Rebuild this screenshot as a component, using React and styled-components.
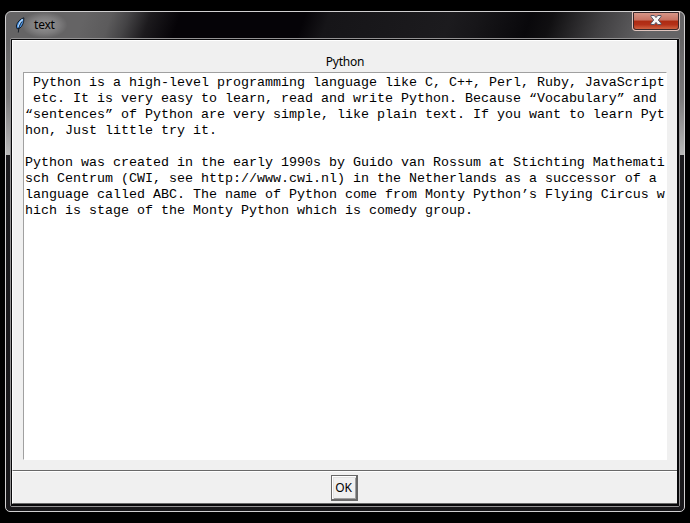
import React from "react";
import styled, { createGlobalStyle } from "styled-components";

const GlobalStyle = createGlobalStyle`
  * { box-sizing: border-box; }
  body { margin: 0; background: #000; overflow: hidden; }
`;

const Desktop = styled.main`
  width: 690px;
  height: 523px;
  padding: 11px 5px 11px;
  background: #000;
  font-family: "Noto Sans", "Open Sans", sans-serif;
  font-size: 12px;
  color: #000;
`;

const Window = styled.section`
  display: flex;
  flex-direction: column;
  width: 680px;
  height: 501px;
  padding: 0 4px 4px;
  border: 1px solid #d0cfd0;
  border-radius: 6px 6px 5px 5px;
  background:
    linear-gradient(110deg, #656465 0, #656465 75px, #5c5b5c 100px, #454446 116px, #1c1a1d 137px, #050307 165px, #050307 282px, #161518 305px, #1c1b1e 420px, #171619 445px, #09080b 495px, #100f11 515px, #403f41 562px, #656466 610px, #656466 100%) 0 0 / 100% 28px no-repeat,
    linear-gradient(#656465, #7a797a 50%, #b9b9b9) 0 28px / 100% 115px no-repeat,
    linear-gradient(#1b1a1d, #19181b 70%, #111113) 0 143px / 100% 100% no-repeat;
`;

const TitleBar = styled.header`
  display: flex;
  flex: none;
  align-items: flex-start;
  height: 26px;
  padding-left: 4px;
`;

const Feather = styled.svg`
  width: 12px;
  height: 16px;
  margin-top: 5px;
`;

const Title = styled.h1`
  margin: 0 auto 0 -4px;
  height: 26px;
  padding: 0 12px;
  background: radial-gradient(ellipse at center, #a3a2a3cc 0, #9291928c 45%, #65646500 72%);
  font-size: 12px;
  font-weight: 400;
  letter-spacing: -0.2px;
  line-height: 25px;
`;

const CloseButton = styled.button`
  display: flex;
  align-items: center;
  justify-content: center;
  width: 48px;
  height: 20px;
  margin: -1px 0 0;
  padding: 0 0 2px;
  border: 1px solid #dfc4bd;
  border-top-color: #e8e2e0;
  border-radius: 0 0 4px 4px;
  outline: 1px solid #38272a;
  outline-offset: -2px;
  background: linear-gradient(#d99a8c 0, #c77262 45%, #ad2b12 50%, #b43119 70%, #d56e4b 100%);
`;

const Client = styled.div`
  display: flex;
  flex: 1;
  flex-direction: column;
  min-height: 0;
  border: 1px solid #939293;
  border-radius: 2px;
`;

const Panel = styled.div`
  display: flex;
  flex: 1;
  flex-direction: column;
  border: 1px solid #08080a;
  border-right-width: 2px;
  border-bottom-width: 2px;
  background: #f0f0f0;
`;

const Content = styled.div`
  display: flex;
  flex: 1;
  flex-direction: column;
  padding: 13px 10px 10px;
  border: 1px solid #fff;
  border-right: 0;
  border-bottom: 1px solid #696969;
`;

const Heading = styled.h2`
  margin: 0;
  height: 18px;
  font-size: 12px;
  font-weight: 400;
  letter-spacing: -0.25px;
  line-height: 16px;
  text-align: center;
`;

const TextArea = styled.pre`
  flex: 1;
  width: 644px;
  margin: 0;
  padding: 2px 0 0 1px;
  overflow: hidden;
  border: 1px solid #fff;
  border-top-color: #a0a0a0;
  border-left-color: #a0a0a0;
  background: #fff;
  font-family: "Liberation Mono", monospace;
  font-size: 13.333px;
  line-height: 16px;
`;

const Footer = styled.footer`
  display: flex;
  flex: none;
  align-items: flex-start;
  justify-content: center;
  height: 33px;
  padding: 3px 2px 0 0;
  border: 1px solid #fff;
  border-width: 1px 0 1px 1px;
  border-bottom-color: #696969;
`;

const OkButton = styled.button`
  width: 27px;
  height: 26px;
  padding: 0;
  border: 2px solid #696969;
  border-top: 1px solid #696969;
  border-left: 1px solid #696969;
  background: #f0f0f0;
  box-shadow: inset 1px 1px #fff, inset 2px 2px #e3e3e3, inset -1px -1px #a0a0a0;
  font: 12px/22px "Noto Sans", "Open Sans", sans-serif;
  letter-spacing: -0.2px;
  color: #000;
`;

const article = ` Python is a high-level programming language like C, C++, Perl, Ruby, JavaScript
 etc. It is very easy to learn, read and write Python. Because “Vocabulary” and 
“sentences” of Python are very simple, like plain text. If you want to learn Pyt
hon, Just little try it.

Python was created in the early 1990s by Guido van Rossum at Stichting Mathemati
sch Centrum (CWI, see http://www.cwi.nl) in the Netherlands as a successor of a 
language called ABC. The name of Python come from Monty Python’s Flying Circus w
hich is stage of the Monty Python which is comedy group.`;

export default function App() {
  return (
    <>
      <GlobalStyle />
      <Desktop>
        <Window>
          <TitleBar>
            <Feather viewBox="0 0 12 16" aria-hidden="true">
              <path d="M9.8.8C6.4 1.8 3.1 5 2.3 9l.8 2.8 2.4-.4C8.6 9.2 10.2 5.5 9.8.8Z" fill="#4a96ea" stroke="#111923" />
              <path d="M8.6 2.2C6.7 4 5 6.8 4.4 9.8" fill="none" stroke="#b9dcff" strokeWidth="1.5" />
              <path d="M8 4.5C6 7 4.6 10.5 4.3 15.5" fill="none" stroke="#111923" strokeWidth=".9" />
            </Feather>
            <Title>text</Title>
            <CloseButton aria-label="Close">
              <svg width="12" height="10" viewBox="0 0 12 10" aria-hidden="true">
                <path d="M1 .5h3.3L6 2.6 7.7.5H11v1.2L8.3 5 11 8.3v1.2H7.7L6 7.4 4.3 9.5H1V8.3L3.7 5 1 1.7Z" fill="#f7f7f7" stroke="#535666" />
              </svg>
            </CloseButton>
          </TitleBar>
          <Client>
            <Panel>
              <Content>
                <Heading>Python</Heading>
                <TextArea>{article}</TextArea>
              </Content>
              <Footer>
                <OkButton>OK</OkButton>
              </Footer>
            </Panel>
          </Client>
        </Window>
      </Desktop>
    </>
  );
}
